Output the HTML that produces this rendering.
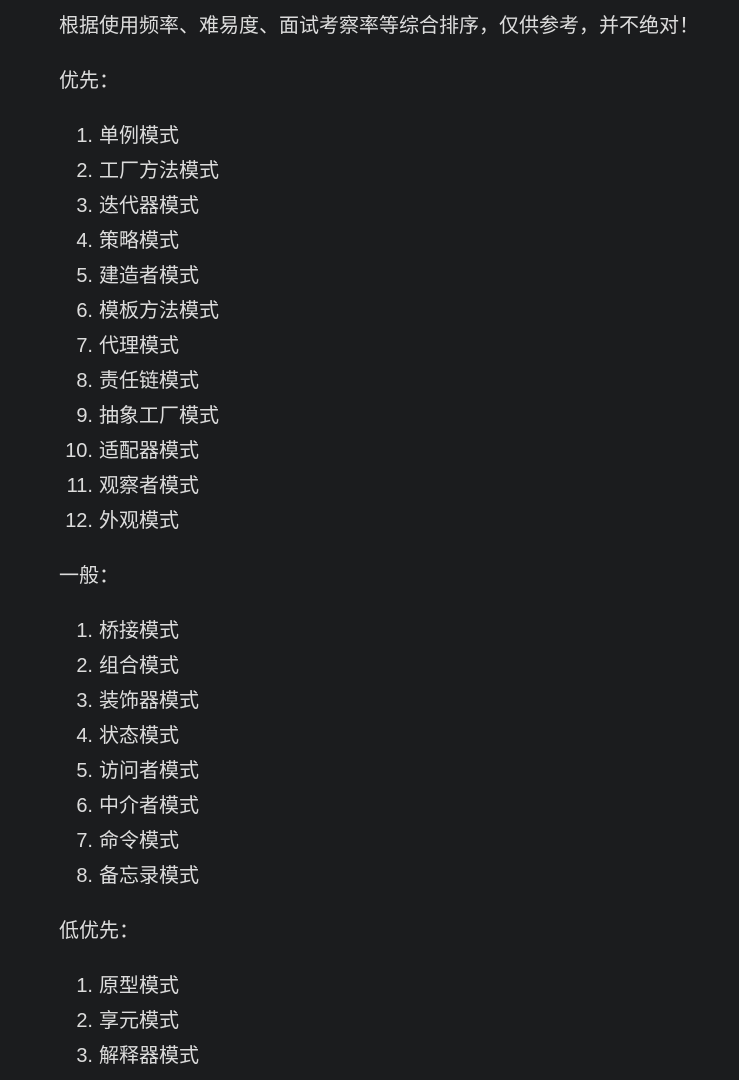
<!DOCTYPE html><html><head><meta charset="utf-8"><style>
body{margin:0;width:739px;height:1080px;background:#1b1c1e;overflow:hidden;font-family:"Liberation Sans","Noto Sans CJK SC",sans-serif;font-size:20px;color:#dcdcdc}
.l{position:absolute;line-height:28px;white-space:nowrap}
.n{position:absolute;width:93px;left:0;text-align:right;line-height:28px}
.t{position:absolute;left:99px;line-height:28px;white-space:nowrap}
</style></head><body>
<div class="l" style="left:59px;top:12px">根据使用频率、难易度、面试考察率等综合排序，仅供参考，并不绝对！</div>
<div class="l" style="left:59px;top:67px">优先：</div>
<div class="l" style="left:59px;top:562px">一般：</div>
<div class="l" style="left:59px;top:917px">低优先：</div>
<script>
function L(items,start){items.forEach((t,i)=>{var y=start+35*i-13;document.body.insertAdjacentHTML('beforeend','<div class="n" style="top:'+y+'px">'+(i+1)+'.</div><div class="t" style="top:'+y+'px">'+t+'</div>')})}
L(["单例模式","工厂方法模式","迭代器模式","策略模式","建造者模式","模板方法模式","代理模式","责任链模式","抽象工厂模式","适配器模式","观察者模式","外观模式"],135);
L(["桥接模式","组合模式","装饰器模式","状态模式","访问者模式","中介者模式","命令模式","备忘录模式"],630);
L(["原型模式","享元模式","解释器模式"],985);
</script>
</body></html>
